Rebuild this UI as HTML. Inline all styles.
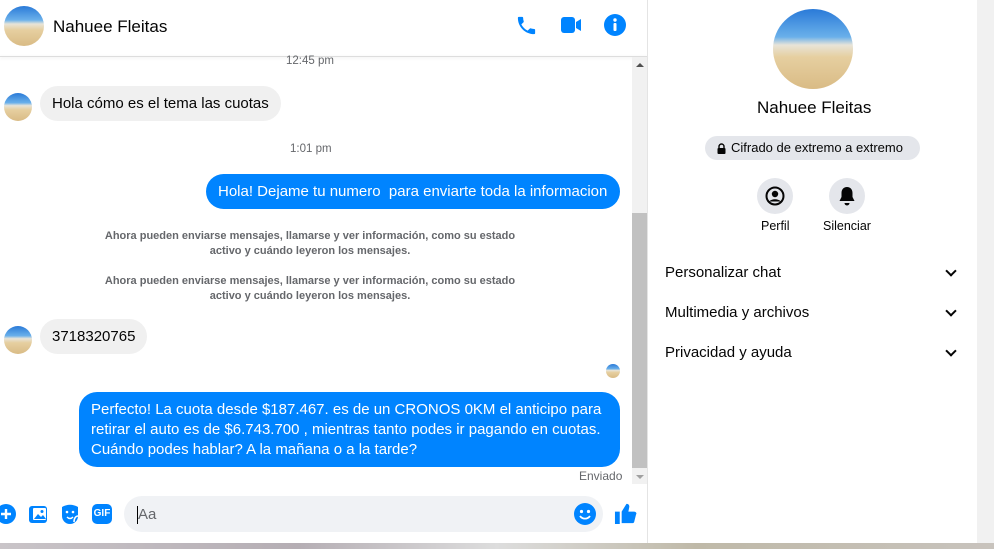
<!DOCTYPE html>
<html><head><meta charset="utf-8"><style>
*{margin:0;padding:0;box-sizing:border-box}
body{width:994px;height:549px;overflow:hidden;background:#fff;font-family:"Liberation Sans",Arial,sans-serif;position:relative;color:#050505}
.abs{position:absolute}
.av{border-radius:50%;background:linear-gradient(#2a7ad8 0%,#6ab0ea 35%,#e8e4d8 45%,#e6cfa0 60%,#d9bb85 100%);overflow:hidden}
.bub{position:absolute;border-radius:18px;font-size:15px;line-height:20px;padding:8px 12px}
.in{background:#f0f0f0;color:#050505}
.out{background:#0084ff;color:#fff}
.time{position:absolute;font-size:11.5px;color:#65676b}
.sys{position:absolute;left:90px;width:440px;text-align:center;font-size:11px;color:#65676b;line-height:15px;font-weight:bold}
.row{position:absolute;left:665px;font-size:15px;color:#050505}
.chev{position:absolute;left:947px;width:8px;height:8px;border-right:2px solid #050505;border-bottom:2px solid #050505;transform:rotate(45deg)}
</style></head><body>
<div class="abs av" style="left:4px;top:6px;width:40px;height:40px"></div>
<div class="abs" style="left:53px;top:17px;font-size:17px">Nahuee Fleitas</div>
<svg class="abs" style="left:515px;top:14px" width="23" height="23" viewBox="0 0 24 24"><path fill="#0084ff" d="M6.6 10.8c1.4 2.8 3.8 5.1 6.6 6.6l2.2-2.2c.3-.3.7-.4 1-.2 1.1.4 2.3.6 3.6.6.6 0 1 .4 1 1V20c0 .6-.4 1-1 1C10.6 21 3 13.4 3 4c0-.6.4-1 1-1h3.5c.6 0 1 .4 1 1 0 1.3.2 2.5.6 3.6.1.3 0 .7-.2 1z"/></svg>
<svg class="abs" style="left:561px;top:16px" width="21" height="18" viewBox="0 0 21 18"><rect x="0" y="1" width="14" height="16" rx="3" fill="#0084ff"/><path d="M15 6l5-3v12l-5-3z" fill="#0084ff"/></svg>
<svg class="abs" style="left:604px;top:14px" width="22" height="22" viewBox="0 0 22 22"><circle cx="11" cy="11" r="11" fill="#0084ff"/><circle cx="11" cy="6" r="1.7" fill="#fff"/><rect x="9.5" y="9" width="3" height="8" rx="1" fill="#fff"/></svg>
<div class="abs" style="left:0;top:56px;width:647px;height:1px;background:#ddd;box-shadow:0 1px 3px rgba(0,0,0,.12)"></div>
<div class="abs" style="left:647px;top:0;width:1px;height:543px;background:#e4e4e4"></div>
<div class="abs" style="left:632px;top:57px;width:15px;height:427px;background:#f1f1f1"></div>
<div class="abs" style="left:632px;top:213px;width:15px;height:255px;background:#c1c1c1"></div>
<div class="abs" style="left:636px;top:63px;width:0;height:0;border-left:4px solid transparent;border-right:4px solid transparent;border-bottom:4px solid #505050"></div>
<div class="abs" style="left:636px;top:475px;width:0;height:0;border-left:4px solid transparent;border-right:4px solid transparent;border-top:4px solid #a0a0a0"></div>
<div class="time" style="left:286px;top:55px">12:45 pm</div>
<div class="abs av" style="left:4px;top:93px;width:28px;height:28px"></div>
<div class="bub in" style="left:40px;top:86px;height:35px">Hola cómo es el tema las cuotas</div>
<div class="time" style="left:290px;top:143px">1:01 pm</div>
<div class="bub out" style="left:206px;top:174px;height:35px;width:414px">Hola! Dejame tu numero&nbsp; para enviarte toda la informacion</div>
<div class="sys" style="top:229px">Ahora pueden enviarse mensajes, llamarse y ver información, como su estado<br>activo y cuándo leyeron los mensajes.</div>
<div class="sys" style="top:274px">Ahora pueden enviarse mensajes, llamarse y ver información, como su estado<br>activo y cuándo leyeron los mensajes.</div>
<div class="abs av" style="left:4px;top:326px;width:28px;height:28px"></div>
<div class="bub in" style="left:40px;top:319px;height:35px">3718320765</div>
<div class="abs av" style="left:606px;top:364px;width:14px;height:14px"></div>
<div class="bub out" style="left:79px;top:392px;width:541px;height:75px;padding:8px 12px">Perfecto! La cuota desde $187.467. es de un CRONOS 0KM el anticipo para retirar el auto es de $6.743.700 , mientras tanto podes ir pagando en cuotas. Cuándo podes hablar? A la mañana o a la tarde?</div>
<div class="abs" style="left:579px;top:469px;font-size:12px;color:#65676b">Enviado</div>
<svg class="abs" style="left:-4px;top:504px" width="20" height="20" viewBox="0 0 20 20"><circle cx="10" cy="10" r="10" fill="#0084ff"/><path d="M10 5v10M5 10h10" stroke="#fff" stroke-width="2.4"/></svg>
<svg class="abs" style="left:29px;top:504px" width="20" height="20" viewBox="0 0 20 20"><rect x="0" y="2" width="18" height="17" rx="3" fill="#0084ff"/><rect x="4" y="4" width="13" height="12" rx="1" fill="#fff"/><path d="M5 15l4-5 3 3 2-2 3 4z" fill="#0084ff"/><circle cx="13" cy="7.5" r="1.5" fill="#0084ff"/></svg>
<svg class="abs" style="left:61px;top:504px" width="18" height="20" viewBox="0 0 18 20"><path d="M1 3c5-3 11-3 16 0v9c0 5-4 8-8 8-5 0-8-4-8-8z" fill="#0084ff"/><circle cx="6" cy="8" r="1.3" fill="#fff"/><circle cx="12" cy="8" r="1.3" fill="#fff"/><path d="M6 13c2 2 4 2 6 0M13 18c0-4 2-6 4-6" stroke="#fff" stroke-width="1.5" fill="none"/></svg>
<div class="abs" style="left:92px;top:504px;width:20px;height:20px;border-radius:5px;background:#0084ff;color:#fff;font-size:10px;font-weight:bold;text-align:center;line-height:20px">GIF</div>
<div class="abs" style="left:124px;top:496px;width:479px;height:36px;border-radius:18px;background:#f0f2f5"></div>
<div class="abs" style="left:137px;top:506px;width:1px;height:18px;background:#000"></div>
<div class="abs" style="left:138px;top:506px;font-size:15px;color:#65676b">Aa</div>
<svg class="abs" style="left:574px;top:503px" width="22" height="22" viewBox="0 0 22 22"><circle cx="11" cy="11" r="11" fill="#0084ff"/><circle cx="7.5" cy="8.5" r="1.6" fill="#fff"/><circle cx="14.5" cy="8.5" r="1.6" fill="#fff"/><path d="M6 13c2.5 3.5 7.5 3.5 10 0" stroke="#fff" stroke-width="1.8" fill="none"/></svg>
<svg class="abs" style="left:614px;top:502px" width="23" height="23" viewBox="0 0 24 24"><path fill="#0084ff" d="M1 10h5v13H1zM8 22V10l5-8c2 0 3 1 3 3l-1 5h6c2 0 3 2 2 3l-2 8c-.5 1-1 1-2 1z"/></svg>
<div class="abs" style="left:0;top:543px;width:994px;height:6px;background:linear-gradient(90deg,#c9c4c8,#b5aeb4 30%,#ddd 50%,#bfb9a8 70%,#c8c3bd)"></div>
<div class="abs" style="left:977px;top:0;width:17px;height:543px;background:#f1f1f1"></div>
<div class="abs av" style="left:773px;top:9px;width:80px;height:80px"></div>
<div class="abs" style="left:757px;top:98px;font-size:17px">Nahuee Fleitas</div>
<div class="abs" style="left:705px;top:136px;width:215px;height:24px;border-radius:12px;background:#e4e6eb;font-size:13px;line-height:24px;padding-left:26px">Cifrado de extremo a extremo</div>
<svg class="abs" style="left:717px;top:143px" width="9" height="11" viewBox="0 0 9 11"><path d="M2 5V3.5a2.5 2.5 0 015 0V5" stroke="#050505" stroke-width="1.4" fill="none"/><rect x="0.5" y="5" width="8" height="6" rx="1" fill="#050505"/></svg>
<div class="abs" style="left:757px;top:178px;width:36px;height:36px;border-radius:50%;background:#e4e6eb"></div>
<svg class="abs" style="left:765px;top:186px" width="20" height="20" viewBox="0 0 20 20"><circle cx="10" cy="10" r="8.5" stroke="#050505" stroke-width="2" fill="none"/><circle cx="10" cy="8" r="3.2" fill="#050505"/><path d="M4.5 15.5c1.5-3 9.5-3 11 0" fill="#050505"/></svg>
<div class="abs" style="left:829px;top:178px;width:36px;height:36px;border-radius:50%;background:#e4e6eb"></div>
<svg class="abs" style="left:838px;top:186px" width="18" height="20" viewBox="0 0 18 20"><path d="M9 1c-3.5 0-5.5 2.5-5.5 6v4L1.5 15h15L14.5 11V7C14.5 3.5 12.5 1 9 1z" fill="#050505"/><path d="M6.5 17a2.5 2.5 0 005 0z" fill="#050505"/></svg>
<div class="abs" style="left:761px;top:219px;font-size:12.5px;color:#050505">Perfil</div>
<div class="abs" style="left:823px;top:219px;font-size:12.5px;color:#050505">Silenciar</div>
<div class="row" style="top:264px">Personalizar chat</div><div class="chev" style="top:267px"></div>
<div class="row" style="top:304px">Multimedia y archivos</div><div class="chev" style="top:307px"></div>
<div class="row" style="top:344px">Privacidad y ayuda</div><div class="chev" style="top:347px"></div>
</body></html>
